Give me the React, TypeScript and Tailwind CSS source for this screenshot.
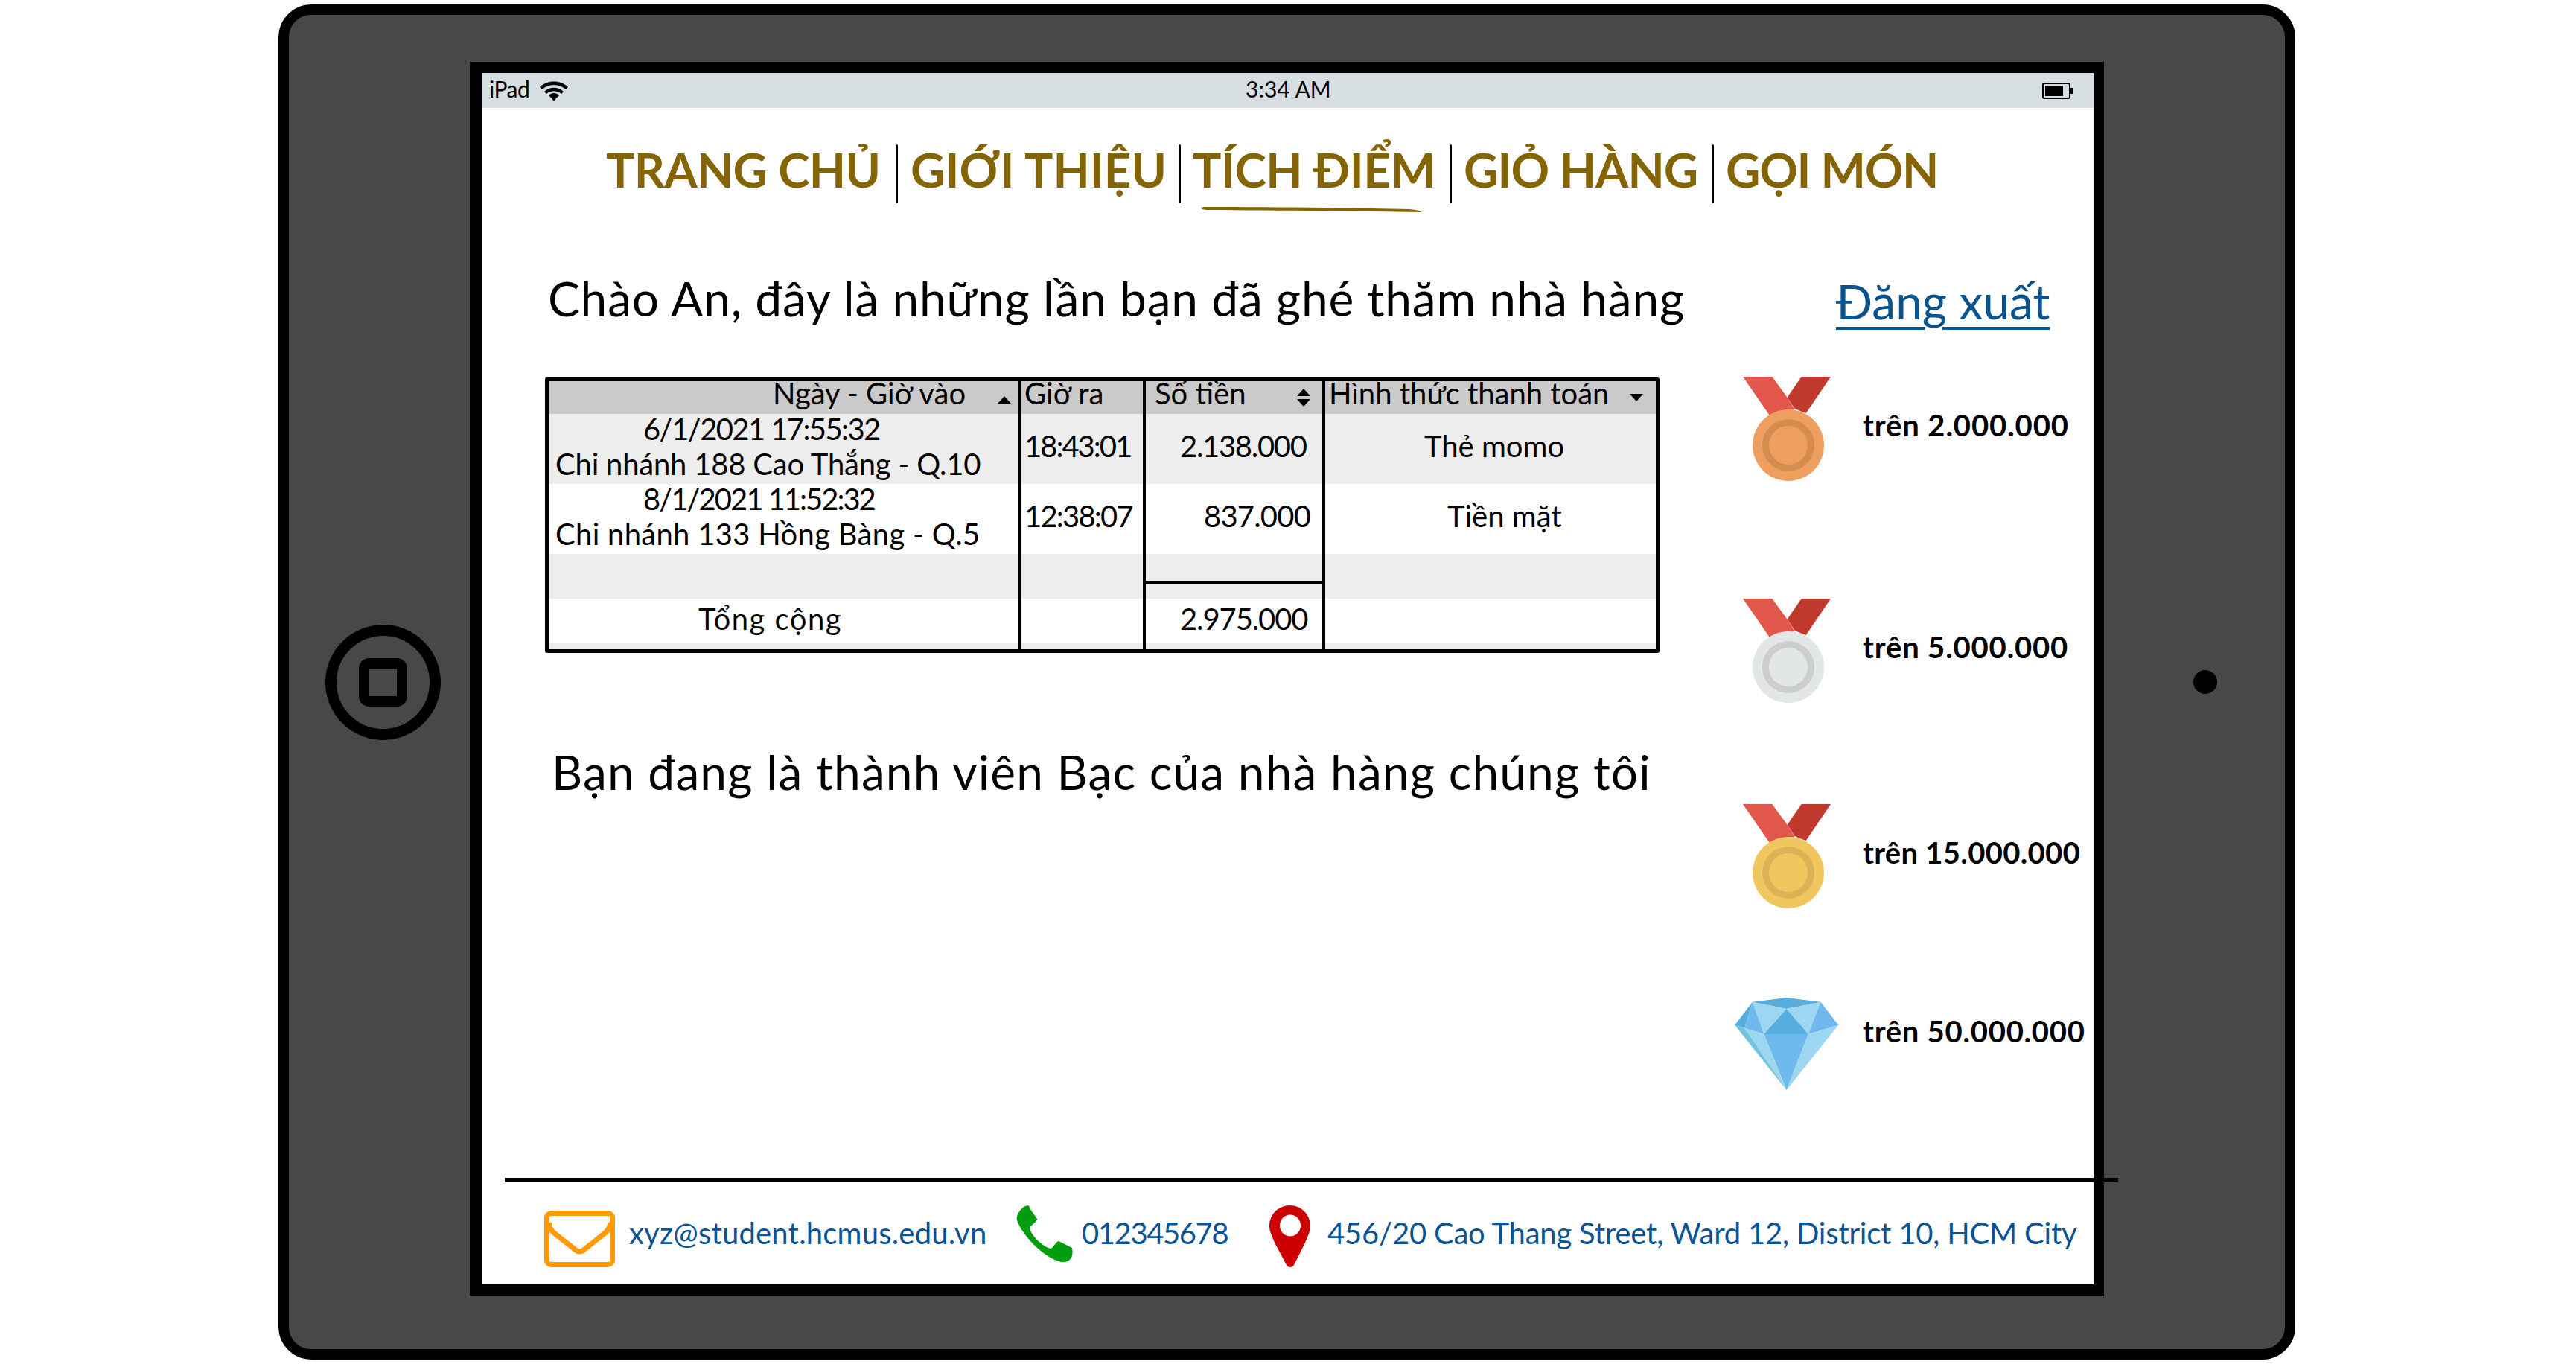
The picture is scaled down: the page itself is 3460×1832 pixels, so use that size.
const sans = "font-['Lato',sans-serif]";

function Wifi() {
  return (
    <svg width="40" height="28" viewBox="0 0 40 28" className="ml-[13px]">
      <path d="M1 9 C11 -1 29 -1 39 9 L36 12 C27 4 13 4 4 12 Z" fill="#000" />
      <path d="M7 15 C14 8 26 8 33 15 L30 18 C24 13 16 13 10 18 Z" fill="#000" />
      <path d="M13 20 C17 16 23 16 27 20 L24 23 H16 Z" fill="#000" />
      <path d="M17 24 H23 L20 28 Z" fill="#000" />
    </svg>
  );
}

function Battery() {
  return (
    <svg width="42" height="22" viewBox="0 0 42 22">
      <rect x="1" y="1" width="36" height="20" rx="2" fill="none" stroke="#000" strokeWidth="2" />
      <rect x="4" y="4" width="24" height="14" fill="#000" />
      <rect x="38" y="7" width="3" height="8" fill="#000" />
    </svg>
  );
}

function NavItem({ label, className }: { label: string; className: string }) {
  return <span className={`${className} h-[79px] leading-[67px] whitespace-nowrap`}>{label}</span>;
}

function Sep({ className }: { className: string }) {
  return <span className={`w-[3px] h-[79px] bg-black rounded-full ${className}`} />;
}

function Medal({ disc, ring }: { disc: string; ring: string }) {
  return (
    <svg width="118" height="140" viewBox="0 0 118 140" className="ml-[11px] mr-[43px] shrink-0">
      <polygon points="78.6,0 118,0 84.6,49.3 69.6,43 59.6,27.7" fill="#BF392C" />
      <polygon points="0,0 39.3,0 59.6,27.7 69.6,44 35.7,51.7" fill="#E2574C" />
      <circle cx="61" cy="92" r="48" fill={disc} />
      <circle cx="61" cy="92" r="35" fill={ring} />
      <circle cx="61" cy="92" r="26" fill={disc} />
    </svg>
  );
}

function Diamond() {
  const TL = "23.9,5.7", TC = "69.6,0", TR = "115.4,5.7", R = "139.3,36.7", B = "69.6,124", L = "0,36.7";
  const P = "69.6,15", LL = "39.3,49", LR = "98.9,49", N = "13.2,40.7";
  return (
    <svg width="140" height="124" viewBox="0 0 140 124" className="mr-[32px] shrink-0">
      <polygon points={`${TL} ${TC} ${TR} ${P}`} fill="#57AEDE" />
      <polygon points={`${TL} ${P} ${LL}`} fill="#9DD6F0" />
      <polygon points={`${TR} ${P} ${LR}`} fill="#9DD6F0" />
      <polygon points={`${P} ${LL} ${LR}`} fill="#57AEDE" />
      <polygon points={`${TL} ${LL} ${N}`} fill="#6FB9EE" />
      <polygon points={`${TL} ${L} ${N}`} fill="#57AEDE" />
      <polygon points={`${TR} ${R} ${LR}`} fill="#6FB9EE" />
      <polygon points={`${LL} ${LR} ${B}`} fill="#6FB9EE" />
      <polygon points={`${N} ${LL} ${B}`} fill="#9DD6F0" />
      <polygon points={`${L} ${N} ${B}`} fill="#72C5DC" />
      <polygon points={`${LR} ${R} ${B}`} fill="#9DD6F0" />
    </svg>
  );
}

function SortUp() {
  return (
    <svg width="18" height="10" viewBox="0 0 18 10" className="mt-[20px] shrink-0">
      <polygon points="9,0 18,10 0,10" fill="#000" />
    </svg>
  );
}

function SortDown() {
  return (
    <svg width="18" height="10" viewBox="0 0 18 10" className="mt-[17px] shrink-0">
      <polygon points="0,0 18,0 9,10" fill="#000" />
    </svg>
  );
}

function SortBoth() {
  return (
    <svg width="18" height="24" viewBox="0 0 18 24" className="mt-[10px] shrink-0">
      <polygon points="9,0 18,10 0,10" fill="#000" />
      <polygon points="0,14 18,14 9,24" fill="#000" />
    </svg>
  );
}

const columns = "grid grid-cols-[631px_167px_241px_448px]";
const divider = "border-l-[4px] border-black";

export default function App() {
  return (
    <div className={`w-[3460px] h-[1832px] bg-white overflow-hidden pt-[6px] pl-[374px] text-black ${sans}`}>
      {/* iPad body */}
      <div className="w-[2709px] h-[1820px] flex pt-[63px] bg-[#484848] border-[14px] border-black rounded-[44px]">
        {/* Home button */}
        <div className="ml-[49px] mt-[756px] w-[155px] h-[155px] shrink-0 flex items-center justify-center border-[15px] border-black rounded-full">
          <div className="w-[65px] h-[65px] border-[14px] border-black rounded-[14px]" />
        </div>

        {/* Screen */}
        <div className="ml-[39px] w-[2195px] h-[1657px] shrink-0 bg-white border-black border-l-[17px] border-r-[14px] border-y-[15px]">
          <div className="relative h-[47px] flex items-center pl-[9px] bg-[#d6dee1] text-[30px]">
            <span className="tracking-[-0.5px] pb-[5px]">iPad</span>
            <Wifi />
            <span className="absolute left-[1025px] pb-[5px]">3:34 AM</span>
            <span className="ml-auto mr-[27px] flex"><Battery /></span>
          </div>

          {/* Nav */}
          <div className="relative mt-[49px] h-[79px] flex pl-[166px] text-[64px] font-bold text-[#846404]">
            <NavItem label="TRANG CHỦ" className="w-[389px] tracking-[-0.7px]" />
            <Sep className="mr-[17px]" />
            <NavItem label="GIỚI THIỆU" className="w-[360px]" />
            <Sep className="mr-[16px]" />
            <NavItem label="TÍCH ĐIỂM" className="w-[345px] tracking-[-0.5px]" />
            <Sep className="mr-[16px]" />
            <NavItem label="GIỎ HÀNG" className="w-[333px] tracking-[-1px]" />
            <Sep className="mr-[16px]" />
            <NavItem label="GỌI MÓN" className="w-[282px] tracking-[-1.3px]" />
            <svg width="296" height="8" viewBox="0 0 296 8" className="absolute left-[965px] top-[84px]">
              <path d="M0 1 L4 0 C90 0 200 1 280 3 C290 4 296 5 296 7 C200 5 90 5 10 4 C4 4 0 3 0 1 Z" fill="#846404" />
            </svg>
          </div>

          {/* Main */}
          <div className="h-[1309px] flex">
            <div className="w-[1682px] shrink-0 flex flex-col items-start">
              <h1 className="ml-[88px] mt-[89px] text-[64px] leading-[77px] tracking-[0.86px] whitespace-nowrap">
                Chào An, đây là những lần bạn đã ghé thăm nhà hàng
              </h1>
              <div className="ml-[84px] mt-[68px] w-[1497px] h-[370px] shrink-0 border-[5px] border-black rounded-[3px] text-[40px] leading-[47px] whitespace-nowrap">
                <div className={`${columns} h-[44px] leading-[32px] bg-[#cacaca]`}>
                  <div className="flex items-start pl-[301px]"><span className="w-[302px]">Ngày - Giờ vào</span><SortUp /></div>
                  <div className={`${divider} pl-[4px]`}>Giờ ra</div>
                  <div className={`${divider} flex items-start pl-[12px]`}><span className="w-[191px]">Số tiền</span><SortBoth /></div>
                  <div className={`${divider} flex items-start pl-[5px]`}><span className="w-[404px]">Hình thức thanh toán</span><SortDown /></div>
                </div>
                <div className={`${columns} h-[94px] bg-[#ededed]`}>
                  <div className="-mt-[3px]">
                    <div className="pl-[127px] tracking-[-1.6px]">6/1/2021 17:55:32</div>
                    <div className="pl-[9px] tracking-[-0.2px]">Chi nhánh 188 Cao Thắng - Q.10</div>
                  </div>
                  <div className={`${divider} pl-[4px] pt-[20px] tracking-[-2px]`}>18:43:01</div>
                  <div className={`${divider} pl-[46px] pt-[20px] tracking-[-1.3px]`}>2.138.000</div>
                  <div className={`${divider} pl-[133px] pt-[20px]`}>Thẻ momo</div>
                </div>
                <div className={`${columns} h-[94px] bg-white`}>
                  <div className="-mt-[3px]">
                    <div className="pl-[127px] tracking-[-2px]">8/1/2021 11:52:32</div>
                    <div className="pl-[9px] tracking-[0.3px]">Chi nhánh 133 Hồng Bàng - Q.5</div>
                  </div>
                  <div className={`${divider} pl-[4px] pt-[20px] tracking-[-1.8px]`}>12:38:07</div>
                  <div className={`${divider} pl-[78px] pt-[20px] tracking-[-0.8px]`}>837.000</div>
                  <div className={`${divider} pl-[164px] pt-[20px]`}>Tiền mặt</div>
                </div>
                <div className={`${columns} h-[60px] bg-[#ededed]`}>
                  <div />
                  <div className={divider} />
                  <div className={divider}><div className="h-[40px] border-b-[4px] border-black" /></div>
                  <div className={divider} />
                </div>
                <div className={`${columns} h-[60px] bg-white`}>
                  <div className="pl-[201px] pt-[4px] tracking-[1.5px]">Tổng cộng</div>
                  <div className={divider} />
                  <div className={`${divider} pl-[46px] pt-[4px] tracking-[-1.1px]`}>2.975.000</div>
                  <div className={divider} />
                </div>
                <div className={`${columns} h-[8px] bg-[#ededed]`}>
                  <div />
                  <div className={divider} />
                  <div className={divider} />
                  <div className={divider} />
                </div>
              </div>
              <h2 className="ml-[93px] mt-[121px] text-[64px] leading-[77px] tracking-[1.15px] whitespace-nowrap">
                Bạn đang là thành viên Bạc của nhà hàng chúng tôi
              </h2>
            </div>

            {/* Logout and tiers */}
            <div className="flex flex-col items-start">
              <a className="ml-[136px] mt-[93px] text-[64px] leading-[77px] text-[#09538f] underline decoration-[4px] underline-offset-[10px] whitespace-nowrap">Đăng xuất</a>
              <div className="mt-[63px] flex text-[40px] leading-[48px] font-bold whitespace-nowrap">
                <Medal disc="#EE9F5F" ring="#D58C50" />
                <span className="pt-[41px] tracking-[0.9px]">trên 2.000.000</span>
              </div>
              <div className="mt-[158px] flex text-[40px] leading-[48px] font-bold whitespace-nowrap">
                <Medal disc="#E3E6E7" ring="#CBCECD" />
                <span className="pt-[41px] tracking-[0.85px]">trên 5.000.000</span>
              </div>
              <div className="mt-[136px] flex text-[40px] leading-[48px] font-bold whitespace-nowrap">
                <Medal disc="#F0C75E" ring="#D9B354" />
                <span className="pt-[41px] tracking-[0.3px]">trên 15.000.000</span>
              </div>
              <div className="mt-[120px] flex text-[40px] leading-[48px] font-bold whitespace-nowrap">
                <Diamond />
                <span className="pt-[21px] tracking-[0.75px]">trên 50.000.000</span>
              </div>
            </div>
          </div>

          {/* Footer */}
          <div className="relative ml-[30px] w-[2167px] h-[6px] bg-black" />
          <div className="flex items-start pl-[83px] text-[40px] leading-[48px] text-[#0b5394] whitespace-nowrap">
            <svg width="95" height="76" viewBox="0 0 95 76" className="mt-[38px] shrink-0">
              <rect x="3.5" y="3.5" width="88" height="69" rx="6" fill="none" stroke="#ff9a00" strokeWidth="7" />
              <path d="M6 16 C7 22 9 26 12 29 L41 52 C45 56 50 56 54 52 L83 29 C86 26 88 22 89 16" fill="none" stroke="#ff9a00" strokeWidth="7" strokeLinejoin="round" />
            </svg>
            <span className="ml-[19px] mt-[44px] w-[520px] tracking-[0.2px]">xyz@student.hcmus.edu.vn</span>
            <svg width="76" height="76" viewBox="0 0 76 76" className="mt-[31px] shrink-0">
              <path d="M15 0 C17 0 18 2 19 5 L28 18 C29 21 19 27 18 30 C20 42 38 57 47 58 C50 56 54 48 57 48 L75 57 C76 62 76 69 72 73 C68 76 62 77 57 75 C35 68 8 40 1 20 C-1 12 8 1 15 0 Z" fill="#009e0f" />
            </svg>
            <span className="ml-[12px] mt-[44px] w-[252px] tracking-[-1.4px]">012345678</span>
            <svg width="55" height="83" viewBox="0 0 55 83" className="mt-[31px] shrink-0">
              <path fillRule="evenodd" d="M27.5 0 C43 0 55 12 55 28 C55 36 50 44 48 50 L33 80 C31 84 25 84 23 80 L7 50 C5 44 0 36 0 28 C0 12 12 0 27.5 0 Z M28 12.5 C20 12.5 14 19 14 27 C14 35 20 41.5 28 41.5 C36 41.5 42 35 42 27 C42 19 36 12.5 28 12.5 Z" fill="#cc0000" />
            </svg>
            <span className="ml-[23px] mt-[44px] tracking-[-0.2px]">456/20 Cao Thang Street, Ward 12, District 10, HCM City</span>
          </div>
        </div>

        {/* Speaker dot */}
        <div className="ml-[120px] mt-[817px] w-[32px] h-[32px] shrink-0 bg-black rounded-full" />
      </div>
    </div>
  );
}
